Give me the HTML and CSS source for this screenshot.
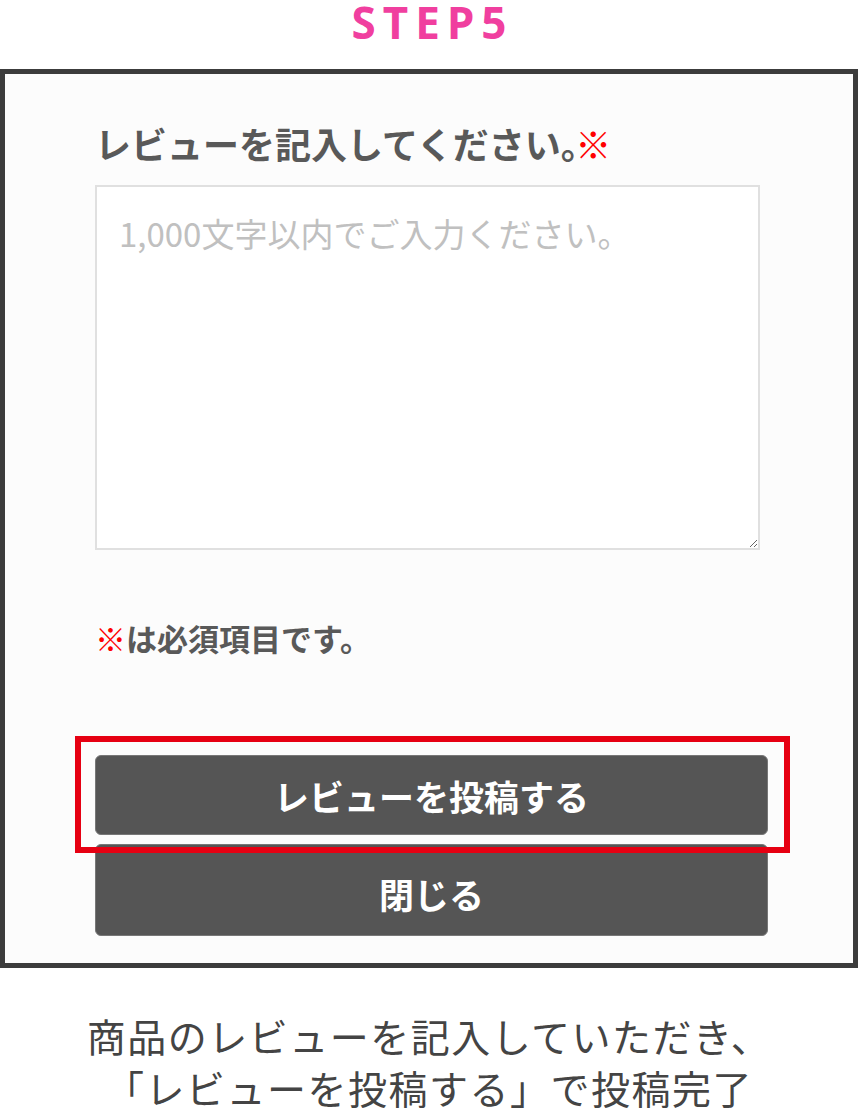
FILE: index.html
```html
<!DOCTYPE html>
<html lang="ja">
<head>
<meta charset="utf-8">
<link rel="stylesheet" href="styles.css">
</head>
<body>
<div class="step">STEP5</div>
<div class="frame">
  <div class="content">
    <div class="label">レビューを記入してください<span class="kuten">。</span><span class="req">※</span></div>
    <textarea class="review" placeholder="1,000文字以内でご入力ください。"></textarea>
    <div class="note"><span class="req">※</span>は必須項目です。</div>
    <div class="highlight">
      <div class="btn">レビューを投稿する</div>
    </div>
    <div class="btn btn-close">閉じる</div>
  </div>
</div>
<div class="caption">商品のレビューを記入していただき、<br>「レビューを投稿する」で投稿完了</div>
</body>
</html>
```
FILE: styles.css
```css
html, body {
  margin: 0;
  padding: 0;
  background: #fff;
}
body {
  width: 858px;
  font-family: "Noto Sans CJK JP", "Noto Sans", sans-serif;
}
.step {
  height: 69px;
  box-sizing: border-box;
  text-align: center;
  font-family: "Noto Sans", "Noto Sans CJK JP", sans-serif;
  font-weight: 700;
  font-size: 44px;
  line-height: 44px;
  letter-spacing: 7px;
  padding-left: 7px;
  color: #f03f9f;
}
.frame {
  box-sizing: border-box;
  width: 858px;
  border: 5px solid #3c3c3c;
  background: #fcfcfc;
  padding: 48px 0 27px 90px;
}
.content {
  width: 673px;
  display: flex;
  flex-direction: column;
}
.label {
  font-weight: 700;
  font-size: 36px;
  line-height: 42px;
  color: #595959;
}
.kuten {
  letter-spacing: -0.6em;
}
.req {
  color: #ff0000;
}
.review {
  display: block;
  margin-top: 21px;
  width: 665px;
  height: 365px;
  box-sizing: border-box;
  border: 2px solid #e0e0e0;
  background: #fff;
  padding: 26px 22px;
  font-family: "Noto Sans CJK JP", sans-serif;
  font-size: 33px;
  line-height: 40px;
  color: #333;
  outline: none;
  resize: vertical;
}
.review::placeholder {
  color: #c0c0c0;
}
.note {
  margin-top: 69px;
  font-weight: 700;
  font-size: 31px;
  line-height: 38px;
  color: #595959;
}
.highlight {
  position: relative;
  z-index: 1;
  margin-top: 79px;
  margin-left: -20px;
  width: 715px;
  box-sizing: border-box;
  border: 6px solid #e60012;
  padding: 13px 16px 12px 14px;
}
.btn {
  height: 80px;
  box-sizing: border-box;
  background: #555;
  border: 1px solid #777;
  border-radius: 6px;
  color: #fff;
  font-weight: 700;
  font-size: 35px;
  display: flex;
  align-items: center;
  justify-content: center;
}
.btn-close {
  margin-top: -9px;
  height: 92px;
  padding-top: 6px;
  border-radius: 6px;
}
.caption {
  margin-top: 41px;
  text-align: center;
  font-size: 39px;
  line-height: 52px;
  letter-spacing: 1.5px;
  color: #444;
}
```
